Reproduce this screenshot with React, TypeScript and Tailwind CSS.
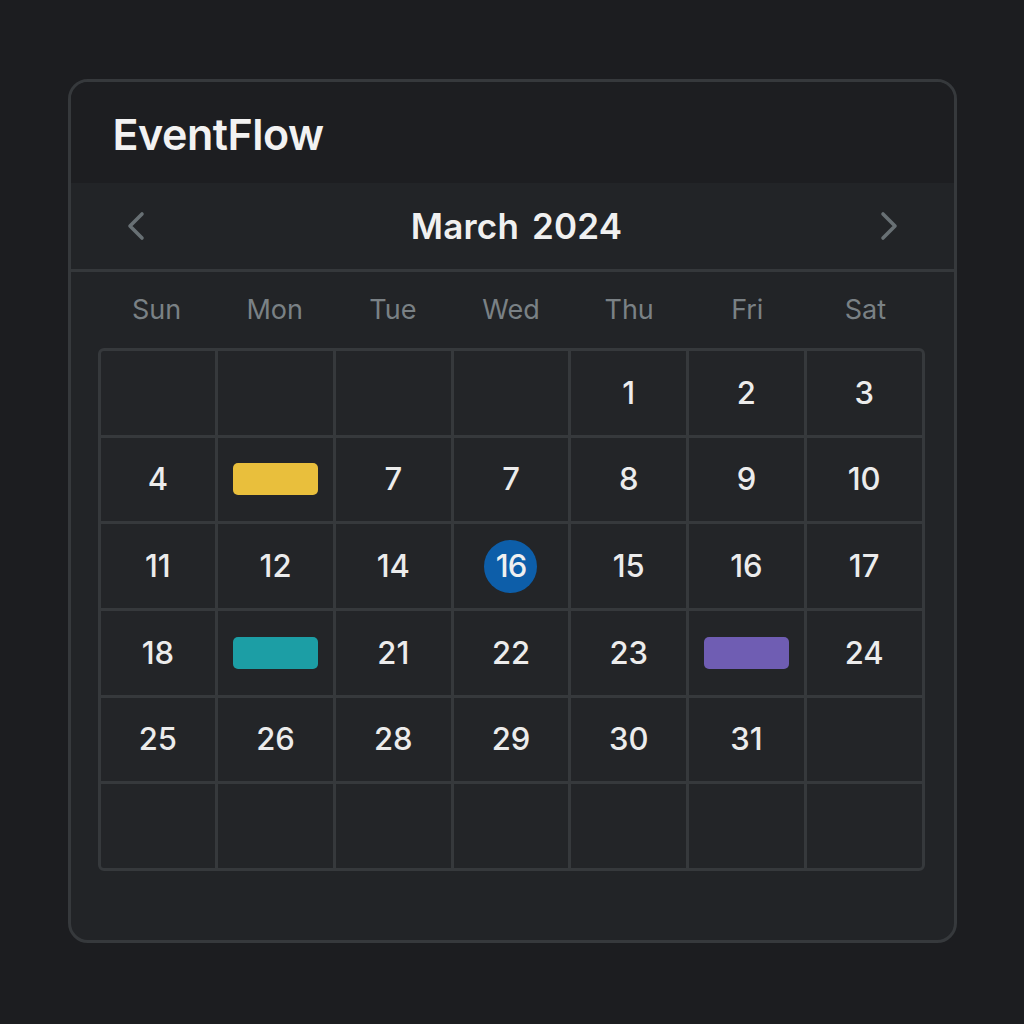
type Cell = { day?: number; event?: string; today?: boolean };

const weekdays = ['Sun', 'Mon', 'Tue', 'Wed', 'Thu', 'Fri', 'Sat'];

const cells: Cell[] = [
  {}, {}, {}, {}, { day: 1 }, { day: 2 }, { day: 3 },
  { day: 4 }, { event: 'bg-[#e9bf3c]' }, { day: 7 }, { day: 7 }, { day: 8 }, { day: 9 }, { day: 10 },
  { day: 11 }, { day: 12 }, { day: 14 }, { day: 16, today: true }, { day: 15 }, { day: 16 }, { day: 17 },
  { day: 18 }, { event: 'bg-[#1c9ea5]' }, { day: 21 }, { day: 22 }, { day: 23 }, { event: 'bg-[#6f5db3]' }, { day: 24 },
  { day: 25 }, { day: 26 }, { day: 28 }, { day: 29 }, { day: 30 }, { day: 31 }, {},
  {}, {}, {}, {}, {}, {}, {},
];

function Chevron({ dir }: { dir: 'left' | 'right' }) {
  const points = dir === 'left' ? '17,5 5,17 17,29' : '5,5 17,17 5,29';
  return (
    <svg width="22" height="34" viewBox="0 0 22 34" fill="none" stroke="#687074" strokeWidth="3.6" strokeLinecap="round" strokeLinejoin="round">
      <polyline points={points} />
    </svg>
  );
}

function DayCell({ cell }: { cell: Cell }) {
  return (
    <div className="bg-[#232528] flex items-center justify-center">
      {cell.event && <div className={`w-[85px] h-[32px] rounded-[5px] ${cell.event}`} />}
      {cell.day !== undefined && !cell.today && (
        <span className="text-[31px] font-medium text-[#ececec]">{cell.day}</span>
      )}
      {cell.today && (
        <span className="w-[53px] h-[53px] rounded-full bg-[#0d5ea9] flex items-center justify-center text-[31px] font-medium text-[#f0f0f0] tracking-[-1px]">
          {cell.day}
        </span>
      )}
    </div>
  );
}

export default function App() {
  return (
    <div className="min-h-screen bg-[#1c1d20] flex justify-center pt-[79px]" style={{ fontFamily: 'Inter, "Noto Sans", sans-serif' }}>
      <div className="w-[889px] h-[864px] border-[3px] border-[#36393c] rounded-[20px] bg-[#222427] overflow-hidden flex flex-col">
        <div className="h-[101px] bg-[#1d1e21] flex items-center px-[42px]">
          <h1 className="text-[43px] font-semibold text-[#f2f2f2] tracking-[-0.5px] pt-[4px]">EventFlow</h1>
        </div>
        <div className="h-[89px] border-b-[3px] border-[#35383b] flex items-center justify-between pl-[54px] pr-[53px]">
          <Chevron dir="left" />
          <span className="text-[35px] font-semibold text-[#f0f0f0] tracking-[0.2px] [word-spacing:4px] pl-[8px]">March 2024</span>
          <Chevron dir="right" />
        </div>
        <div className="pl-[27px] pr-[29px] flex-1 flex flex-col">
          <div className="grid grid-cols-7 h-[76px] items-center">
            {weekdays.map((w) => (
              <span key={w} className="text-center text-[27px] text-[#7a8185]">{w}</span>
            ))}
          </div>
          <div className="grid grid-cols-7 grid-rows-6 gap-[3px] bg-[#36393c] border-[3px] border-[#36393c] rounded-[6px] h-[523px] overflow-hidden">
            {cells.map((c, i) => (
              <DayCell key={i} cell={c} />
            ))}
          </div>
        </div>
      </div>
    </div>
  );
}
